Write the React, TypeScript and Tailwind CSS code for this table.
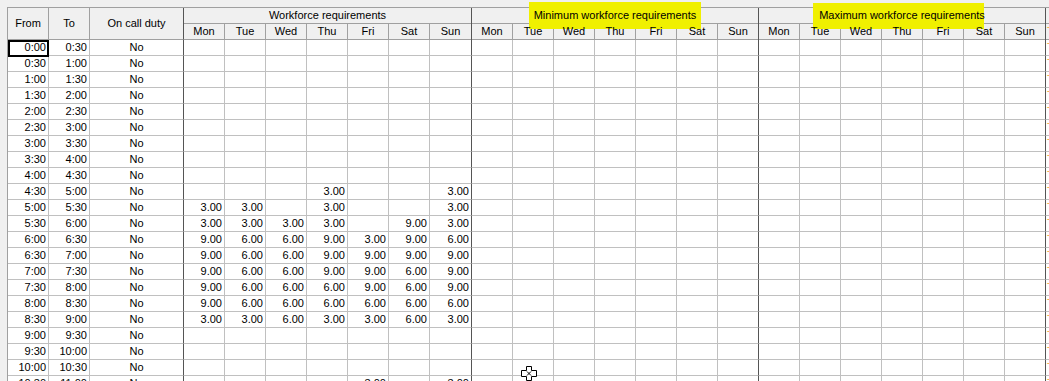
import React from 'react';

type Col = { w: string; last: boolean };

const days = ['Mon', 'Tue', 'Wed', 'Thu', 'Fri', 'Sat', 'Sun'];

// group widths include the right border; the first group's Sun is one pixel wider
const groups: { title: string; cols: Col[] }[] = [
    {
        title: 'Workforce requirements',
        cols: days.map((_, i) => ({ w: i === 6 ? 'w-[42px]' : 'w-[41px]', last: i === 6 })),
    },
    {
        title: 'Minimum workforce requirements',
        cols: days.map((_, i) => ({ w: 'w-[41px]', last: i === 6 })),
    },
    {
        title: 'Maximum workforce requirements',
        cols: days.map((_, i) => ({ w: 'w-[41px]', last: i === 6 })),
    },
];

const values: Record<number, string[]> = {
    9: ['', '', '', '3.00', '', '', '3.00'],
    10: ['3.00', '3.00', '', '3.00', '', '', '3.00'],
    11: ['3.00', '3.00', '3.00', '3.00', '', '9.00', '3.00'],
    12: ['9.00', '6.00', '6.00', '9.00', '3.00', '9.00', '6.00'],
    13: ['9.00', '6.00', '6.00', '9.00', '9.00', '9.00', '9.00'],
    14: ['9.00', '6.00', '6.00', '9.00', '9.00', '6.00', '9.00'],
    15: ['9.00', '6.00', '6.00', '6.00', '9.00', '6.00', '9.00'],
    16: ['9.00', '6.00', '6.00', '6.00', '6.00', '6.00', '6.00'],
    17: ['3.00', '3.00', '6.00', '3.00', '3.00', '6.00', '3.00'],
    21: ['', '', '', '', '3.00', '', '3.00'],
};

const time = (i: number) => `${Math.floor(i / 2)}:${i % 2 ? '30' : '00'}`;

function HeaderCell({ className, children }: { className: string; children?: React.ReactNode }) {
    return (
        <div className={`shrink-0 flex items-center justify-center bg-[#f0f0f0] border-b border-[#a0a0a0] ${className}`}>
            <span className="relative z-10 whitespace-nowrap">{children}</span>
        </div>
    );
}

function Header() {
    return (
        <div className="flex">
            <HeaderCell className="w-[41px] h-[32px] border-r">From</HeaderCell>
            <HeaderCell className="w-[41px] h-[32px] border-r">To</HeaderCell>
            <HeaderCell className="w-[94px] h-[32px] border-r border-r-[#555555]">On call duty</HeaderCell>
            {groups.map((g) => (
                <div key={g.title} className="shrink-0 flex flex-col border-r border-[#555555]">
                    <HeaderCell className="h-[16px] leading-[15px]">{g.title}</HeaderCell>
                    <div className="flex">
                        {g.cols.map((c, i) => (
                            <HeaderCell
                                key={i}
                                className={`h-[16px] leading-[15px] ${c.last ? (c.w === 'w-[42px]' ? 'w-[41px]' : 'w-[40px]') : c.w + ' border-r'}`}
                            >
                                {days[i]}
                            </HeaderCell>
                        ))}
                    </div>
                </div>
            ))}
            <div className="shrink-0 flex flex-col w-[20px]">
                <div className="h-[16px] bg-[#f0f0f0] border-b border-[#a0a0a0]" />
                <div className="h-[16px] bg-[#f0f0f0] border-b border-[#a0a0a0] pl-[1px] leading-[15px] text-[#f0a830]">T</div>
            </div>
        </div>
    );
}

function Row({ index }: { index: number }) {
    const v = values[index] ?? [];
    return (
        <div className="flex h-[16px] leading-[15px]">
            <div className="shrink-0 w-[41px] bg-white border-r border-b border-[#c0c0c0] text-right pr-[2px]">{time(index)}</div>
            <div className="shrink-0 w-[41px] bg-white border-r border-b border-[#c0c0c0] text-right pr-[2px]">{time(index + 1)}</div>
            <div className="shrink-0 w-[94px] bg-white border-r border-b border-[#c0c0c0] border-r-[#555555] text-center">No</div>
            {groups.map((g, gi) => (
                <div key={g.title} className="shrink-0 flex">
                    {g.cols.map((c, i) => (
                        <div
                            key={i}
                            className={`shrink-0 ${c.w} bg-white border-r border-b border-[#c0c0c0] text-right pr-[2px] ${c.last ? 'border-r-[#555555]' : ''}`}
                        >
                            {gi === 0 ? v[i] : ''}
                        </div>
                    ))}
                </div>
            ))}
            <div className="shrink-0 w-[20px] bg-white border-b border-[#c0c0c0] pl-[1px] text-[#f0a830]">T</div>
        </div>
    );
}

function CellCursor() {
    return (
        <svg className="absolute left-[520px] top-[366px]" width="18" height="16" viewBox="0 0 18 16">
            <path
                d="M6.5 0.5 H11.5 V4.5 H16.5 V10.5 H11.5 V14.5 H6.5 V10.5 H1.5 V4.5 H6.5 Z"
                fill="white"
                stroke="black"
                strokeWidth="1"
            />
            <path d="M7 5.5 L11 9.5 M11 5.5 L7 9.5" stroke="black" strokeWidth="1" />
        </svg>
    );
}

export default function App() {
    const rows = Array.from({ length: 22 }, (_, i) => i);
    return (
        <div className="relative w-[1049px] h-[381px] overflow-hidden bg-[#f0f0f0] font-['Liberation_Sans',Arial,sans-serif] text-[11px] text-black">
            <div className="pt-[7px] pl-[7px]">
                <div className="w-max border-l border-t border-[#a0a0a0]">
                    <Header />
                    {rows.map((i) => (
                        <Row key={i} index={i} />
                    ))}
                </div>
            </div>

            {/* highlighter marks over the two group titles */}
            <div className="absolute left-[529px] top-[2px] w-[172px] h-[27px] bg-[#f0f000]" />
            <div className="absolute left-[813px] top-[3px] w-[171px] h-[26px] bg-[#f0f000]" />

            {/* focused cell */}
            <div className="absolute left-[8px] top-[40px] w-[41px] h-[17px] border-2 border-black" />

            <CellCursor />
        </div>
    );
}
